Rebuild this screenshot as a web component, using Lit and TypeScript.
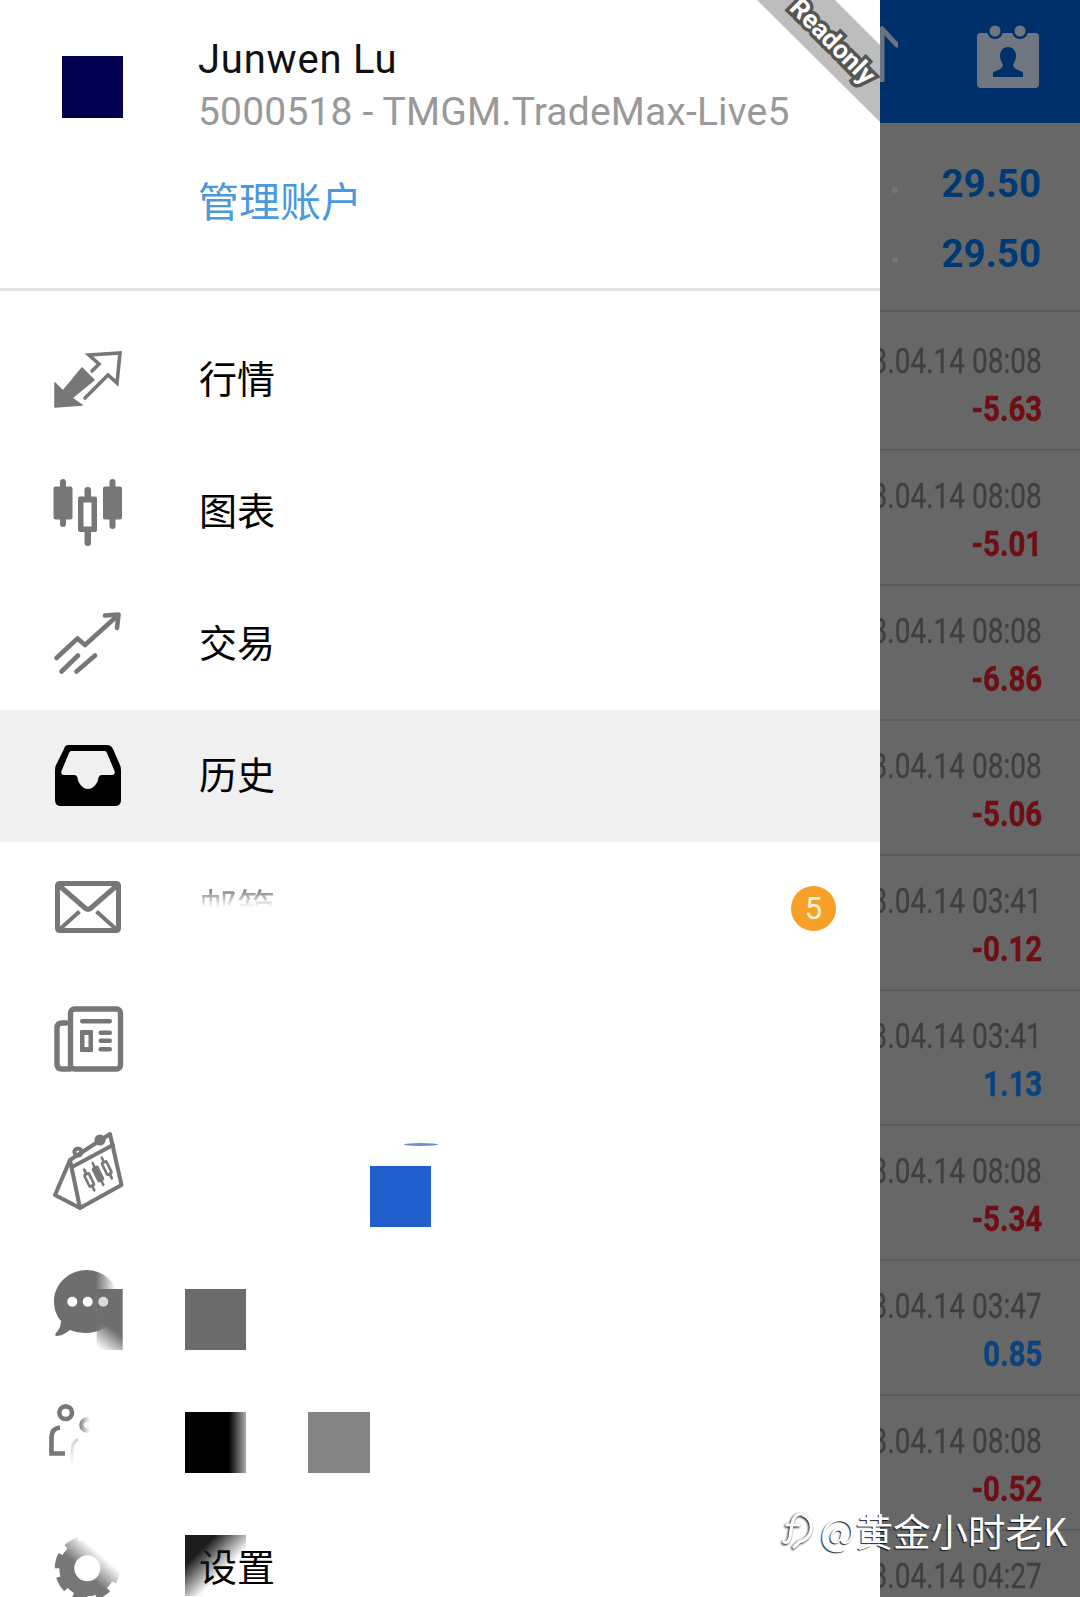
import { LitElement, html, svg, css } from "lit";
import { customElement } from "lit/decorators.js";
import { classMap } from "lit/directives/class-map.js";

type Deal = { time: string; profit: string };

const DEALS: Deal[] = [
  { time: "2023.04.14 08:08", profit: "-5.63" },
  { time: "2023.04.14 08:08", profit: "-5.01" },
  { time: "2023.04.14 08:08", profit: "-6.86" },
  { time: "2023.04.14 08:08", profit: "-5.06" },
  { time: "2023.04.14 03:41", profit: "-0.12" },
  { time: "2023.04.14 03:41", profit: "1.13" },
  { time: "2023.04.14 08:08", profit: "-5.34" },
  { time: "2023.04.14 03:47", profit: "0.85" },
  { time: "2023.04.14 08:08", profit: "-0.52" },
  { time: "2023.04.14 04:27", profit: "" },
];

const GREY = "#777";

const ICONS = {
  quotes: svg`
    <polygon points="5,63 5,39 13,47 32,24 44,36 22,54 32,61" fill="${GREY}" stroke="${GREY}" stroke-width="1.5" stroke-linejoin="round" />
    <path d="M35 54 L58 31 L67 39 L70 9 L39 11 L49 20 L42 27" fill="none" stroke="${GREY}" stroke-width="3.6" stroke-linecap="round" />`,
  chart: svg`
    <g fill="${GREY}">
      <rect x="3.5" y="10.5" width="19" height="33" rx="2" />
      <rect x="10" y="3" width="6" height="48" rx="3" />
      <rect x="53" y="10.5" width="19" height="33" rx="2" />
      <rect x="59.5" y="3" width="6" height="50" rx="3" />
      <rect x="34.5" y="11" width="6.5" height="12" rx="3" />
      <rect x="34.5" y="54" width="6.5" height="16" rx="3" />
      <path fill-rule="evenodd" d="M30 20.5 H45 Q47 20.5 47 22.5 V54 Q47 56 45 56 H30 Q28 56 28 54 V22.5 Q28 20.5 30 20.5 Z M33.5 26.5 V50.5 H41.5 V26.5 Z" />
    </g>`,
  trade: svg`
    <g fill="none" stroke="${GREY}" stroke-width="4.6" stroke-linecap="round" stroke-linejoin="round">
      <path d="M6.5 50 L27.5 30.5 L35 37 L66 9" />
      <path d="M55 7.5 L68.5 6.5 L67 20" />
      <path d="M11.5 63.5 L28 47.5" />
      <path d="M26.5 63.5 L45 47.5" />
    </g>`,
  history: svg`
    <path fill="#000" fill-rule="evenodd" d="M18 5 H57 Q61 5 63 9 L70 25 Q71 27 71 30 V60 Q71 66 65 66 H11 Q5 66 5 60 V30 Q5 27 6 25 L14 9 Q15 5 18 5 Z M21 11 Q20 11 19 13 L11.5 31 Q10.5 35 14 35 H24 Q27 35 27.5 38 C28.5 44 33 49 38 49 C43 49 47.5 44 48.5 38 Q49 35 52 35 H62 Q65.5 35 64.5 31 L57 13 Q56 11 55 11 Z" />`,
  mail: svg`
    <g fill="none" stroke="${GREY}" stroke-linejoin="round">
      <rect x="7.5" y="11.5" width="61" height="47" rx="2" stroke-width="5" />
      <path d="M8.5 13 L35 36 Q38 38.5 41 36 L67.5 13" stroke-width="5" />
      <path d="M10 57 L29.5 39.5 M66 57 L46.5 39.5" stroke-width="4" />
    </g>`,
  news: svg`
    <g fill="none" stroke="${GREY}" stroke-width="5.4" stroke-linecap="round">
      <rect x="20.5" y="5" width="50" height="60" rx="4" />
      <path d="M16 19 H12 Q7 19 7 24 V60 Q7 65 12 65 H20" />
    </g>
    <g fill="${GREY}">
      <rect x="30" y="15" width="32" height="4.4" rx="2.2" />
      <path fill-rule="evenodd" d="M31 26 H42 Q43 26 43 27 V47 Q43 48 42 48 H31 Q30 48 30 47 V27 Q30 26 31 26 Z M34.5 31 V43 H38.5 V31 Z" />
      <rect x="48.5" y="26.5" width="13.5" height="4.4" rx="2.2" />
      <rect x="48.5" y="34.5" width="13.5" height="4.4" rx="2.2" />
      <rect x="48.5" y="43" width="13.5" height="4.4" rx="2.2" />
    </g>`,
  calendar: svg`
    <g fill="none" stroke="${GREY}" stroke-width="4" stroke-linejoin="round" stroke-linecap="round">
      <path d="M20 24 L60 -2 L71.5 49 L30 72 Z" />
      <path d="M20 24 L5 59 L30 72" />
      <path d="M22 31 L63 9" />
      <circle cx="28" cy="16" r="3.6" />
      <circle cx="50" cy="4" r="3.6" />
      <g transform="rotate(-26 48 38)" stroke-width="2.6">
        <rect x="35" y="33" width="5" height="13" rx="1" />
        <path d="M37.5 28 V33 M37.5 46 V51" />
        <rect x="45.5" y="31" width="5" height="14" rx="1" fill="${GREY}" />
        <path d="M48 26 V31 M48 45 V50" />
        <rect x="56" y="30" width="5" height="13" rx="1" />
        <path d="M58.5 25 V30 M58.5 43 V48" />
      </g>
    </g>`,
  chat: svg`
    <defs>
      <linearGradient id="chatFade" gradientUnits="userSpaceOnUse" x1="46" y1="0" x2="66" y2="0">
        <stop offset="0" stop-color="#6e6e6e" />
        <stop offset="1" stop-color="#fff" />
      </linearGradient>
      <linearGradient id="chatPatch" gradientUnits="userSpaceOnUse" x1="72" y1="48" x2="48" y2="80">
        <stop offset="0.4" stop-color="#6e6e6e" />
        <stop offset="1" stop-color="#6e6e6e" stop-opacity="0" />
      </linearGradient>
    </defs>
    <path fill="url(#chatFade)" d="M36.5 2 C54 2 69 16 69 33.5 C69 51 54 65 36.5 65 C30 65 25 64 20 62 C16 65 11 68 7 68 Q4 68 6 65 C9 62 11 58 11 53 C6.5 48 4 41 4 33.5 C4 16 19 2 36.5 2 Z" />
    <rect x="46.7" y="21" width="26" height="61" fill="url(#chatPatch)" />
    <g fill="#fff">
      <circle cx="22.3" cy="33.7" r="5" />
      <circle cx="37.7" cy="33.7" r="5" />
      <circle cx="53.3" cy="33.7" r="5" opacity="0.75" />
    </g>`,
  people: svg`
    <defs>
      <linearGradient id="peopleFade" gradientUnits="userSpaceOnUse" x1="30" y1="0" x2="40" y2="0">
        <stop offset="0" stop-color="#888" />
        <stop offset="1" stop-color="#888" stop-opacity="0" />
      </linearGradient>
      <linearGradient id="peopleBody" gradientUnits="userSpaceOnUse" x1="0" y1="34" x2="0" y2="66">
        <stop offset="0" stop-color="#ccc" />
        <stop offset="1" stop-color="#ccc" stop-opacity="0" />
      </linearGradient>
    </defs>
    <g fill="none" stroke="${GREY}" stroke-width="4.6">
      <circle cx="15.7" cy="12.7" r="6.3" />
      <path d="M10 27.5 Q1.5 28.5 1.5 37 V53.5 H15" />
      <circle cx="37" cy="25" r="5.5" stroke="url(#peopleFade)" />
      <path d="M28 39 Q22 43 22 50 V66" stroke="url(#peopleBody)" stroke-width="3" />
    </g>`,
  settings: svg`
    <defs>
      <linearGradient id="gearWash" gradientUnits="userSpaceOnUse" x1="30" y1="36" x2="46" y2="18">
        <stop offset="0" stop-color="#fff" stop-opacity="0" />
        <stop offset="1" stop-color="#fff" />
      </linearGradient>
    </defs>
    <g fill="none" stroke="${GREY}">
      <circle cx="37.3" cy="36.3" r="20.5" stroke-width="15" />
      <circle cx="37.3" cy="36.3" r="29" stroke-width="7" stroke-dasharray="14 8.78" />
    </g>
    <rect x="0" y="0" width="72" height="72" fill="url(#gearWash)" />`,
};

type MenuItem = { icon: keyof typeof ICONS; label?: string; active?: boolean; fading?: boolean; badge?: string };

const MENU: MenuItem[] = [
  { icon: "quotes", label: "行情" },
  { icon: "chart", label: "图表" },
  { icon: "trade", label: "交易" },
  { icon: "history", label: "历史", active: true },
  { icon: "mail", label: "邮箱", fading: true, badge: "5" },
  { icon: "news" },
  { icon: "calendar" },
  { icon: "chat" },
  { icon: "people" },
  { icon: "settings", label: "设置" },
];

@customElement("app-root")
export class AppRoot extends LitElement {
  static styles = css`
    :host {
      display: block;
      position: relative;
      width: 1080px;
      height: 1597px;
      overflow: hidden;
      background: #676767;
      font-family: Roboto, "Noto Sans CJK SC", sans-serif;
    }
    * {
      box-sizing: border-box;
    }

    /* history screen, dimmed behind the drawer */
    .toolbar {
      height: 123px;
      background: #003069;
      display: flex;
      justify-content: flex-end;
      align-items: flex-start;
      padding-right: 41px;
      gap: 79px;
    }
    .toolbar-arrow {
      margin-top: 26px;
    }
    .toolbar-cal {
      margin-top: 24px;
    }
    .summary {
      height: 189px;
      padding-top: 25px;
      border-bottom: 2px solid #5c5c5c;
    }
    .summary-row {
      height: 70px;
      display: flex;
      justify-content: space-between;
      align-items: center;
      padding: 0 39px 0 892px;
      font-size: 38.5px;
      font-weight: 700;
      color: #003a75;
    }
    .summary-dot {
      width: 6px;
      height: 6px;
      border-radius: 50%;
      background: #757575;
      margin-top: 14px;
    }
    .deals {
      padding-top: 4px;
    }
    .deal {
      height: 135px;
      border-bottom: 2px solid #5c5c5c;
      display: flex;
      flex-direction: column;
      align-items: flex-end;
      padding: 22px 38px 0 0;
    }
    .deal-time,
    .deal-profit {
      font-size: 35px;
      line-height: 48px;
      transform-origin: right center;
      white-space: nowrap;
    }
    .deal-time {
      color: #3f3f3f;
      transform: scaleX(0.8);
      -webkit-text-stroke: 0.3px currentColor;
    }
    .deal-profit {
      font-weight: 700;
      transform: scaleX(0.84);
      -webkit-text-stroke: 0.5px currentColor;
    }
    .loss {
      color: #6d0f14;
    }
    .gain {
      color: #0b4381;
    }

    /* navigation drawer */
    .drawer {
      position: absolute;
      top: 0;
      left: 0;
      width: 880px;
      height: 1597px;
      background: #fff;
      overflow: hidden;
    }
    .account {
      height: 291px;
      border-bottom: 3px solid #e2e2e2;
      display: flex;
      padding-left: 62px;
      gap: 75px;
    }
    .avatar {
      flex: none;
      width: 61px;
      height: 62px;
      margin-top: 56px;
      background: #00004f;
    }
    .account-text {
      padding-top: 33px;
    }
    .name {
      font-size: 40px;
      line-height: 53px;
      letter-spacing: 0.8px;
      color: #111;
    }
    .server {
      font-size: 39px;
      line-height: 52px;
      letter-spacing: 0.18px;
      color: #999;
    }
    .manage {
      margin-top: 36px;
      font-size: 41px;
      line-height: 58px;
      color: #4b98dc;
    }
    .menu {
      padding-top: 23px;
    }
    .item {
      height: 132px;
      display: flex;
      align-items: center;
      padding: 0 44px 0 50px;
      gap: 77px;
    }
    .item.active {
      background: #f0f0f0;
    }
    .item svg {
      flex: none;
      overflow: visible;
    }
    .label {
      font-size: 38px;
      margin-bottom: 8px;
      color: #000;
    }
    .label.fading {
      color: #888;
      -webkit-mask-image: linear-gradient(to bottom, #000 25%, transparent 55%);
      mask-image: linear-gradient(to bottom, #000 25%, transparent 55%);
    }
    .badge {
      margin-left: auto;
      width: 45px;
      height: 45px;
      border-radius: 50%;
      background: #f7a028;
      color: #fff3d8;
      font-size: 31px;
      display: flex;
      align-items: center;
      justify-content: center;
    }

    /* scrubbed patches lying over the menu */
    .patch {
      position: absolute;
      width: 61px;
      height: 61px;
    }
    .patch-blue {
      left: 370px;
      top: 1166px;
      background: #205ecb;
    }
    .patch-streak {
      position: absolute;
      left: 404px;
      top: 1143px;
      width: 34px;
      height: 3px;
      border-radius: 50%;
      background: #6a8fd0;
    }
    .patch-grey {
      left: 185px;
      top: 1289px;
      background: #6b6b6b;
    }
    .patch-black {
      left: 185px;
      top: 1412px;
      background: linear-gradient(to right, #000 72%, #aaa 100%);
    }
    .patch-mid {
      left: 308px;
      top: 1412px;
      width: 62px;
      background: #848484;
    }
    .patch-corner {
      left: 185px;
      top: 1535px;
      background: linear-gradient(135deg, #1c1c1c 25%, transparent 62%);
    }

    .ribbon {
      position: absolute;
      top: 0;
      right: 0;
      width: 125px;
      height: 125px;
      background: #bdbdbe;
      clip-path: polygon(2px 0, 80px 0, 125px 45px, 125px 122px);
    }
    .ribbon-text {
      position: absolute;
      left: 78px;
      top: 41px;
      transform: translate(-50%, -50%) rotate(45deg);
      font-size: 26px;
      font-weight: 700;
      color: #fff;
      -webkit-text-stroke: 7px #555;
      paint-order: stroke fill;
      white-space: nowrap;
    }

    .watermark {
      position: absolute;
      left: 782px;
      top: 1505px;
      display: flex;
      align-items: center;
      gap: 6px;
      font-family: "Noto Sans CJK SC", sans-serif;
      font-size: 37.5px;
      line-height: 50px;
      color: #fff;
      text-shadow: -1px 1px 1px rgba(0, 0, 0, 0.85);
      white-space: nowrap;
    }
    .watermark svg {
      flex: none;
      filter: drop-shadow(-1px 1px 1px #000);
    }
  `;

  private renderItem(item: MenuItem) {
    return html`
      <div class=${classMap({ item: true, active: !!item.active })}>
        <svg width="72" height="72" viewBox="0 0 72 72">${ICONS[item.icon]}</svg>
        ${item.label
          ? html`<span class=${classMap({ label: true, fading: !!item.fading })}>${item.label}</span>`
          : ""}
        ${item.badge ? html`<span class="badge">${item.badge}</span>` : ""}
      </div>
    `;
  }

  render() {
    return html`
      <div class="toolbar">
        <svg class="toolbar-arrow" width="36" height="56" viewBox="0 0 36 56" fill="none" stroke="#6a7480" stroke-width="5" stroke-linecap="round">
          <path d="M20 4 V54" />
          <path d="M2 20 L20 3 L35 19" />
        </svg>
        <svg class="toolbar-cal" width="62" height="64" viewBox="0 0 62 64">
          <rect x="0" y="9" width="62" height="55" rx="4" fill="#6f767f" />
          <circle cx="18" cy="7" r="8" fill="#003069" />
          <circle cx="43" cy="7" r="8" fill="#003069" />
          <circle cx="18" cy="7" r="5.5" fill="#6f767f" />
          <circle cx="43" cy="7" r="5.5" fill="#6f767f" />
          <path fill="#003069" d="M31 23 C36 23 39 27 39 32 C39 36 37 39 36 41 C36 44 40 46 46 48 V53 H16 V48 C22 46 26 44 26 41 C25 39 23 36 23 32 C23 27 26 23 31 23 Z" />
        </svg>
      </div>
      <div class="summary">
        <div class="summary-row"><span class="summary-dot"></span>29.50</div>
        <div class="summary-row"><span class="summary-dot"></span>29.50</div>
      </div>
      <div class="deals">
        ${DEALS.map(
          (d) => html`
            <div class="deal">
              <span class="deal-time">${d.time}</span>
              <span class=${classMap({ "deal-profit": true, loss: d.profit.startsWith("-"), gain: !d.profit.startsWith("-") })}>${d.profit}</span>
            </div>
          `
        )}
      </div>

      <nav class="drawer">
        <div class="account">
          <div class="avatar"></div>
          <div class="account-text">
            <div class="name">Junwen Lu</div>
            <div class="server">5000518 - TMGM.TradeMax-Live5</div>
            <div class="manage">管理账户</div>
          </div>
        </div>
        <div class="menu">${MENU.map((item) => this.renderItem(item))}</div>
        <div class="patch-streak"></div>
        <div class="patch patch-blue"></div>
        <div class="patch patch-grey"></div>
        <div class="patch patch-black"></div>
        <div class="patch patch-mid"></div>
        <div class="patch patch-corner"></div>
        <div class="ribbon"><span class="ribbon-text">Readonly</span></div>
      </nav>

      <div class="watermark">
        <svg width="32" height="40" viewBox="0 0 32 40" fill="none" stroke="#fff" stroke-width="3.2" stroke-linecap="round">
          <path d="M19 4 C13 4 11 8 10 14 L8 27 C7 32 5 33 2 32" />
          <path d="M5 15 H17" />
          <path d="M21 5 C27 7 30 13 29 20 C28 27 22 31 17 32 L12 37" />
        </svg>
        <span>@黄金小时老K</span>
      </div>
    `;
  }
}

declare global {
  interface HTMLElementTagNameMap {
    "app-root": AppRoot;
  }
}
